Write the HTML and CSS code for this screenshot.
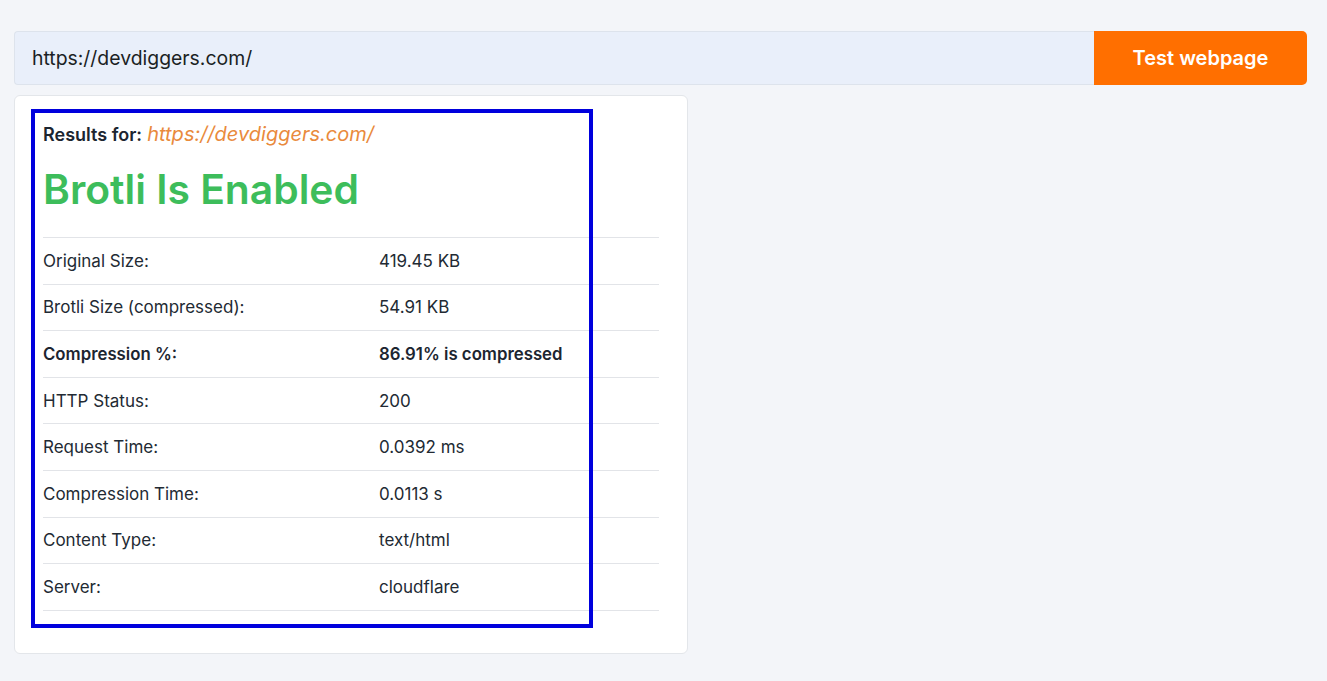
FILE: index.html
```html
<!DOCTYPE html>
<html lang="en">
<head>
<meta charset="utf-8">
<title>Brotli Test</title>
<link rel="stylesheet" href="styles.css">
</head>
<body>
<main class="page">
  <form class="search">
    <div class="search-input">https://devdiggers.com/</div>
    <button type="button" class="search-btn">Test webpage</button>
  </form>
  <section class="card">
    <div class="highlight"></div>
    <p class="results-for"><strong>Results for:</strong> <a class="result-link">https://devdiggers.com/</a></p>
    <h1 class="status">Brotli Is Enabled</h1>
    <table class="results">
      <tbody>
        <tr><td>Original Size:</td><td>419.45 KB</td></tr>
        <tr><td>Brotli Size (compressed):</td><td>54.91 KB</td></tr>
        <tr class="strong"><td>Compression %:</td><td>86.91% is compressed</td></tr>
        <tr><td>HTTP Status:</td><td>200</td></tr>
        <tr><td>Request Time:</td><td>0.0392 ms</td></tr>
        <tr><td>Compression Time:</td><td>0.0113 s</td></tr>
        <tr><td>Content Type:</td><td>text/html</td></tr>
        <tr><td>Server:</td><td>cloudflare</td></tr>
      </tbody>
    </table>
  </section>
</main>
</body>
</html>
```
FILE: styles.css
```css
* { box-sizing: border-box; }
html, body { margin: 0; padding: 0; }
body {
  background: #f3f5f9;
  font-family: Inter, "Open Sans", sans-serif;
  color: #222a33;
  width: 1327px;
  height: 681px;
  overflow: hidden;
}
.page {
  padding: 31px 20px 0 14px;
}
.search {
  display: flex;
  height: 54px;
  margin: 0;
}
.search-input {
  flex: 1;
  background: #e9effa;
  border: 1px solid #dde3ec;
  border-right: none;
  border-radius: 4px 0 0 4px;
  display: flex;
  align-items: center;
  padding-left: 17px;
  font-size: 19.4px;
  color: #1b1f24;
}
.search-btn {
  width: 213px;
  background: #ff6f00;
  border: none;
  border-radius: 0 5px 5px 0;
  color: #fff;
  font-family: inherit;
  font-size: 20px;
  font-weight: 600;
  padding: 0;
}
.card {
  position: relative;
  margin-top: 10px;
  width: 674px;
  height: 559px;
  background: #fff;
  border: 1px solid #e3e6ea;
  border-radius: 6px;
  padding: 26px 28px 0 28px;
}
.highlight {
  position: absolute;
  left: 16px;
  top: 13px;
  width: 562px;
  height: 519px;
  border: 4px solid #0000dd;
  pointer-events: none;
}
.results-for {
  margin: 0;
  font-size: 18px;
  line-height: 24px;
  white-space: nowrap;
}
.results-for strong { font-weight: 600; color: #1c2530; }
.result-link {
  color: #e98a3c;
  font-style: italic;
  font-size: 20px;
}
.status {
  margin: 16px 0 0 0;
  font-size: 40.8px;
  line-height: 52px;
  font-weight: 600;
  color: #3dbd5b;
  white-space: nowrap;
}
.results {
  margin-top: 22px;
  width: 616px;
  border-collapse: collapse;
  border-top: 1px solid #e2e4e8;
}
.results td {
  padding: 10.8px 0;
  line-height: 24px;
  font-size: 17px;
  border-bottom: 1px solid #e2e4e8;
  color: #222a33;
  white-space: nowrap;
}
.results td:first-child { width: 336px; }
.results tr.strong td { font-weight: 600; color: #1c2530; font-size: 16.8px; }
```
